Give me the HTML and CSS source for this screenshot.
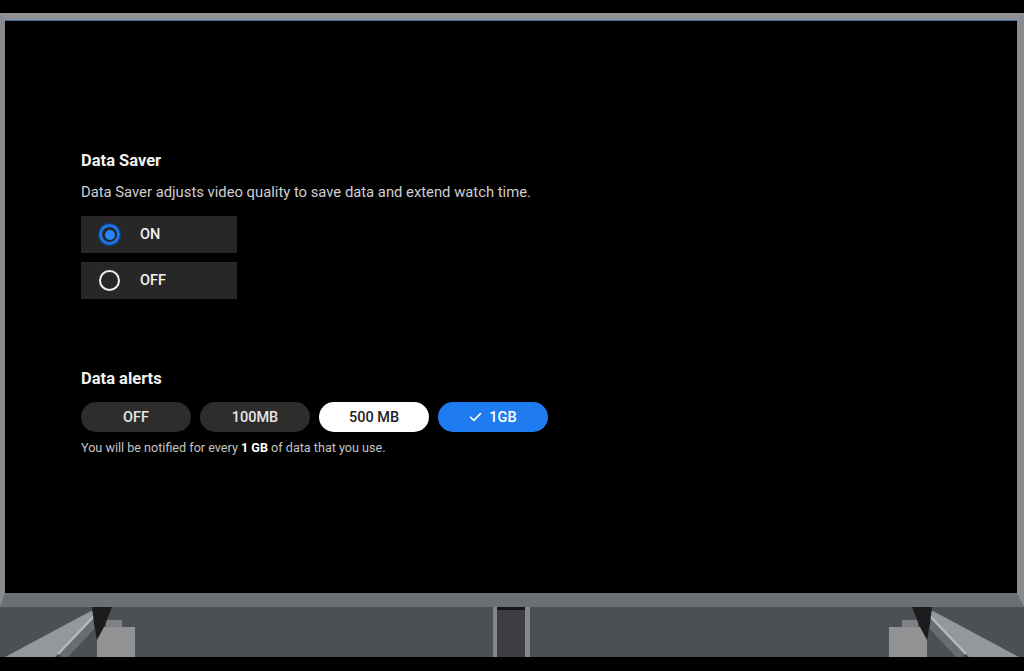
FILE: index.html
```html
<!DOCTYPE html>
<html lang="en">
<head>
    <meta charset="UTF-8">
    <meta name="viewport" content="width=device-width, initial-scale=1.0">
    <title>Data Saver - TV Settings</title>
    <link rel="stylesheet" href="styles.css">
</head>
<body>
    <div class="tv">
        <div class="frame">
            <div class="screen">
                <section class="group">
                    <h2>Data Saver</h2>
                    <p class="desc">Data Saver adjusts video quality to save data and extend watch time.</p>
                    <div class="radio-list">
                        <div class="radio-row">
                            <span class="radio checked"></span>
                            <span class="radio-label">ON</span>
                        </div>
                        <div class="radio-row">
                            <span class="radio"></span>
                            <span class="radio-label">OFF</span>
                        </div>
                    </div>
                </section>

                <section class="group alerts">
                    <h2>Data alerts</h2>
                    <div class="chips">
                        <div class="chip">OFF</div>
                        <div class="chip">100MB</div>
                        <div class="chip focused">500 MB</div>
                        <div class="chip selected">
                            <svg class="tick" width="13" height="10" viewBox="0 0 13 10">
                                <path d="M1.5 5.2 L4.8 8.4 L11.5 1.6" fill="none" stroke="#fff" stroke-width="1.6" stroke-linecap="round" stroke-linejoin="round"/>
                            </svg>
                            1GB
                        </div>
                    </div>
                    <p class="note">You will be notified for every <b>1 GB</b> of data that you use.</p>
                </section>
            </div>
        </div>

        <!-- floor and stand legs under the set -->
        <div class="stand">
            <svg width="1024" height="50" viewBox="0 0 1024 50">
                <g id="leg">
                    <rect x="97" y="20" width="38" height="30" fill="#909294"/>
                    <rect x="106" y="13" width="16" height="7" fill="#7e8083"/>
                    <polygon points="5,50 91,4 99,9 55,50" fill="#95989b"/>
                    <line x1="62" y1="50" x2="101" y2="8" stroke="#6a6d70" stroke-width="9"/>
                    <line x1="58" y1="47" x2="97" y2="6" stroke="#b8bbbe" stroke-width="2.5"/>
                    <polygon points="92,0 112,0 105,18 97,33 94,17" fill="#1b1c1e"/>
                </g>
                <use href="#leg" transform="translate(1024 0) scale(-1 1)"/>
                <rect x="493" y="0" width="37" height="50" fill="#85888b"/>
                <rect x="497" y="0" width="28" height="50" fill="#3c3e41"/>
                <rect x="497" y="0" width="28" height="3" fill="#141516"/>
            </svg>
        </div>
    </div>
</body>
</html>
```

FILE: styles.css
```css
body {
    margin: 0;
    background: #000;
    color: #fff;
    font-family: Roboto, "Noto Sans", sans-serif;
    height: 671px;
    overflow: hidden;
}
.tv {
    padding-top: 13px;
}
.frame {
    border-top: 7px solid #8f9397;
    border-left: 5px solid #878b8f;
    border-right: 7px solid #878b8f;
    border-bottom: 14px solid #6c6f73;
}
.screen {
    height: 573px;
    box-sizing: border-box;
    border-top: 1px solid #3b6ca8;
    background: #000;
    padding: 130px 0 0 76px;
}
h2 {
    margin: 0;
    font-size: 16.5px;
    font-weight: 700;
    line-height: 20px;
    color: #f2f2f2;
}
.desc {
    margin: 12px 0 0;
    font-size: 14.8px;
    line-height: 18px;
    color: #cfcfcf;
}
.radio-list {
    display: flex;
    flex-direction: column;
    gap: 9px;
    margin-top: 15px;
}
.radio-row {
    display: flex;
    align-items: center;
    width: 156px;
    height: 37px;
    box-sizing: border-box;
    padding-left: 18px;
    background: #272727;
}
.radio {
    width: 21px;
    height: 21px;
    box-sizing: border-box;
    border: 2.5px solid #f0f0f0;
    border-radius: 50%;
    position: relative;
}
.radio.checked {
    border: 3px solid #1c74e6;
    box-shadow: 0 0 0 1px #0e3d7a;
}
.radio.checked::after {
    content: "";
    position: absolute;
    left: 2.5px;
    top: 2.5px;
    width: 10px;
    height: 10px;
    border-radius: 50%;
    background: #2a86ff;
}
.radio-label {
    margin-left: 20px;
    font-size: 14.5px;
    font-weight: 500;
    color: #f2f2f2;
}
.alerts {
    margin-top: 70px;
}
.chips {
    display: flex;
    gap: 9px;
    margin-top: 13px;
}
.chip {
    width: 110px;
    height: 30px;
    border-radius: 15px;
    background: #2d2d2d;
    color: #e6e6e6;
    font-size: 14.5px;
    font-weight: 500;
    display: flex;
    align-items: center;
    justify-content: center;
    gap: 7px;
}
.chip.focused {
    background: #fff;
    color: #222;
}
.chip.selected {
    background: #1e7bf0;
    color: #fff;
}
.note {
    margin: 8px 0 0;
    font-size: 12.6px;
    line-height: 16px;
    color: #c4c4c4;
}
.note b {
    color: #fff;
}
.stand {
    height: 50px;
    background: #4d5053;
}
.stand svg {
    display: block;
}
```
